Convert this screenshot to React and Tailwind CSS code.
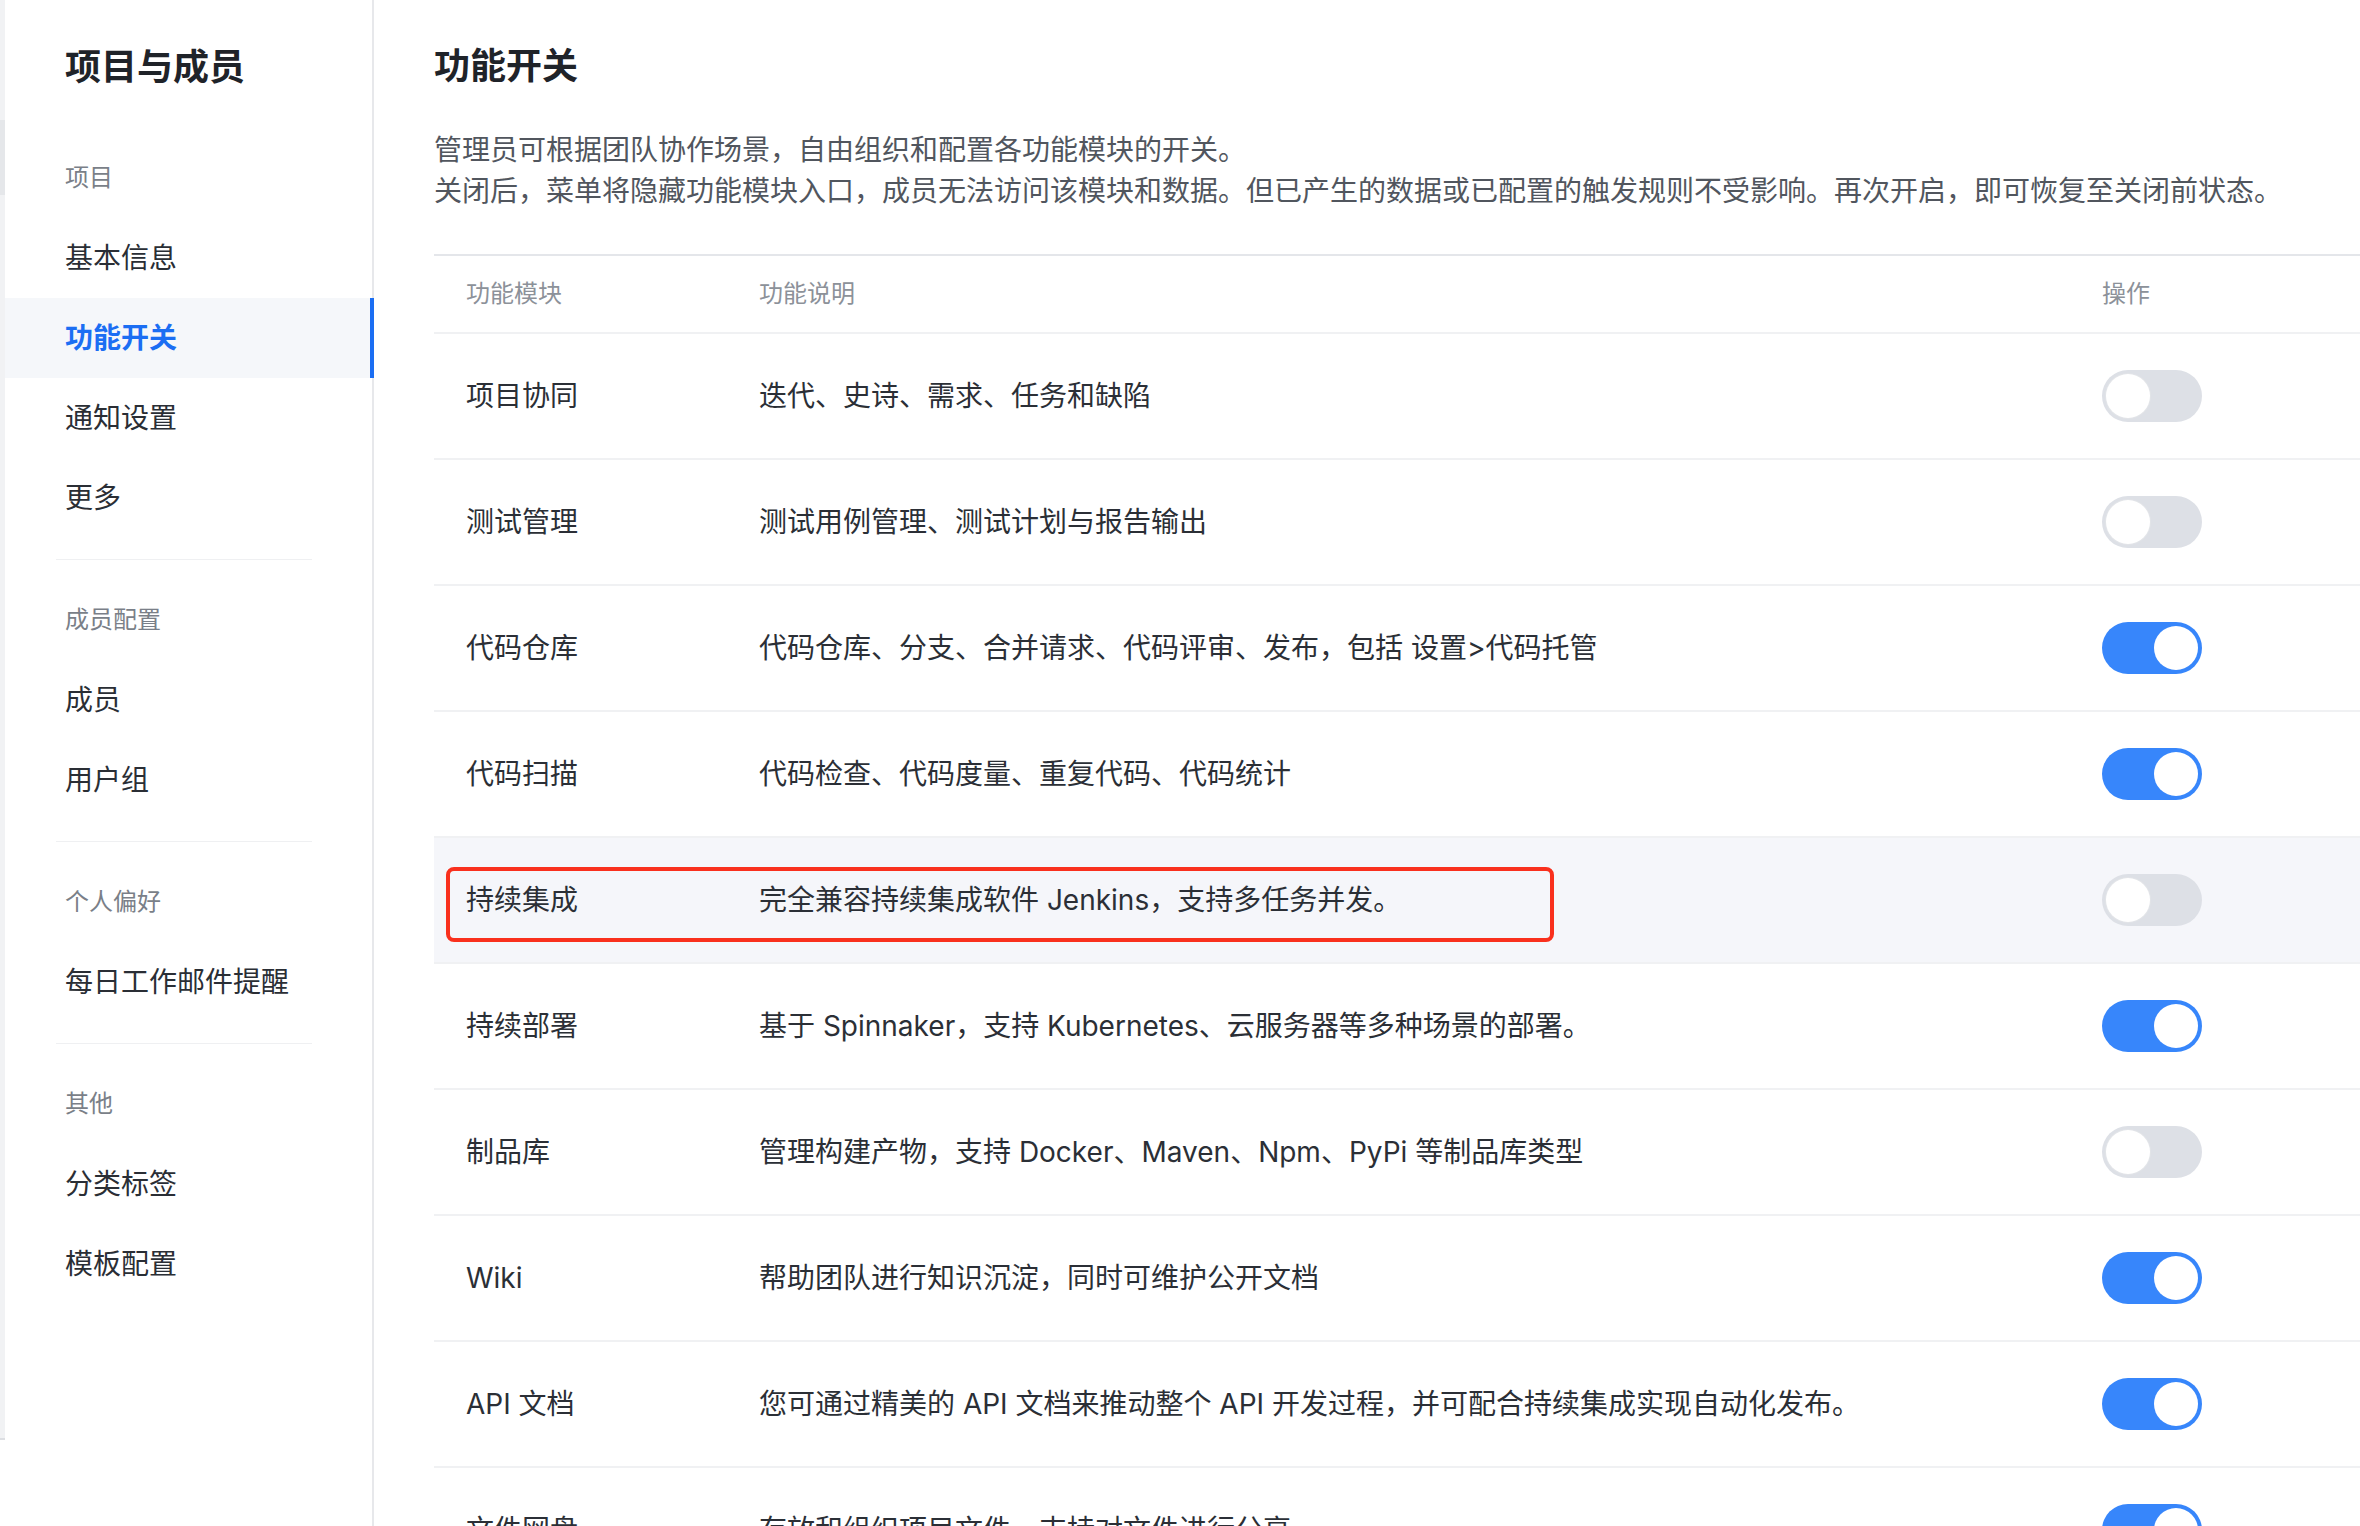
import React from "react";

const font = {
  fontFamily: 'Inter, "Noto Sans CJK SC", "Noto Sans", sans-serif',
};

const menu = [
  {
    label: "项目",
    items: ["基本信息", "功能开关", "通知设置", "更多"],
  },
  { label: "成员配置", items: ["成员", "用户组"] },
  { label: "个人偏好", items: ["每日工作邮件提醒"] },
  { label: "其他", items: ["分类标签", "模板配置"] },
];

const modules = [
  { name: "项目协同", desc: "迭代、史诗、需求、任务和缺陷", on: false },
  { name: "测试管理", desc: "测试用例管理、测试计划与报告输出", on: false },
  {
    name: "代码仓库",
    desc: "代码仓库、分支、合并请求、代码评审、发布，包括 设置>代码托管",
    on: true,
  },
  { name: "代码扫描", desc: "代码检查、代码度量、重复代码、代码统计", on: true },
  {
    name: "持续集成",
    desc: "完全兼容持续集成软件 Jenkins，支持多任务并发。",
    on: false,
    marked: true,
  },
  {
    name: "持续部署",
    desc: "基于 Spinnaker，支持 Kubernetes、云服务器等多种场景的部署。",
    on: true,
  },
  {
    name: "制品库",
    desc: "管理构建产物，支持 Docker、Maven、Npm、PyPi 等制品库类型",
    on: false,
  },
  { name: "Wiki", desc: "帮助团队进行知识沉淀，同时可维护公开文档", on: true },
  {
    name: "API 文档",
    desc: "您可通过精美的 API 文档来推动整个 API 开发过程，并可配合持续集成实现自动化发布。",
    on: true,
  },
  { name: "文件网盘", desc: "存放和组织项目文件，支持对文件进行分享", on: true },
];

const Toggle = ({ on }) => {
  return (
    <div
      className={`flex h-[52px] w-[100px] items-center rounded-full p-[4px] ${
        on ? "justify-end bg-[#3786fb]" : "justify-start bg-[#dde0e6]"
      }`}
    >
      <div
        className={`h-[44px] w-[44px] rounded-full bg-white ${
          on ? "" : "shadow-[0_0_0_1px_#e2e4e8]"
        }`}
      />
    </div>
  );
};

const Sidebar = () => {
  return (
    <aside className="flex w-[374px] shrink-0">
      {/* outer strip on the far left */}
      <div className="flex w-[5px] flex-col">
        <div className="h-[120px] bg-[#f1f2f4]" />
        <div className="h-[75px] bg-[#e5e7ea]" />
        <div className="h-[1243px] bg-[#f1f2f4]" />
        <div className="h-[2px] bg-[#dcdee2]" />
      </div>
      <div className="flex-1 border-r-2 border-[#e7e8eb] bg-white">
        <div className="h-[138px] pl-[60px] pt-[42px]">
          <h1 className="text-[36px] font-semibold leading-[50px] text-[#1f2329]">
            项目与成员
          </h1>
        </div>
        {menu.map((group, gi) => (
          <div key={group.label}>
            {gi > 0 && (
              <div className="ml-[51px] mr-[60px] mt-[21px] mb-[20px] h-px bg-[#eff0f2]" />
            )}
            <div className="flex h-[80px] items-center pl-[60px] text-[24px] text-[#7a7f88]">
              {group.label}
            </div>
            {group.items.map((item) =>
              item === "功能开关" ? (
                <div
                  key={item}
                  className="-mr-[2px] flex h-[80px] items-center border-r-4 border-[#1b6ef3] bg-[#f5f7fa] pl-[60px] text-[28px] font-semibold text-[#1b6ef3]"
                >
                  {item}
                </div>
              ) : (
                <div
                  key={item}
                  className="flex h-[80px] items-center pl-[60px] text-[28px] text-[#2a2e35]"
                >
                  {item}
                </div>
              )
            )}
          </div>
        ))}
      </div>
    </aside>
  );
};

const App = () => {
  return (
    <div
      className="flex h-[1526px] w-full overflow-hidden bg-white"
      style={font}
    >
      <Sidebar />
      <main className="flex-1 pl-[60px] pt-[42px]">
        <h2 className="text-[36px] font-semibold leading-[48px] text-[#1f2329]">
          功能开关
        </h2>
        <div className="mt-[40px] text-[28px] leading-[41px] text-[#51565e]">
          <p>管理员可根据团队协作场景，自由组织和配置各功能模块的开关。</p>
          <p className="whitespace-nowrap">
            关闭后，菜单将隐藏功能模块入口，成员无法访问该模块和数据。但已产生的数据或已配置的触发规则不受影响。再次开启，即可恢复至关闭前状态。
          </p>
        </div>

        <div className="mt-[42px] border-t-2 border-[#e4e6ea]">
          <div className="grid h-[78px] grid-cols-[325px_1fr_258px] items-center border-b-2 border-[#f0f1f3] text-[24px] text-[#8c9199]">
            <div className="pl-[32px]">功能模块</div>
            <div>功能说明</div>
            <div>操作</div>
          </div>
          {modules.map((m) => (
            <div
              key={m.name}
              className={`relative grid h-[126px] grid-cols-[325px_1fr_258px] items-center border-b-2 border-[#f0f1f3] text-[28px] text-[#2b2f36] ${
                m.marked ? "bg-[#f5f6fa]" : ""
              }`}
            >
              <div className="pl-[32px]">{m.name}</div>
              <div className="whitespace-nowrap">{m.desc}</div>
              <div>
                <Toggle on={m.on} />
              </div>
              {m.marked && (
                <div className="pointer-events-none absolute left-[12px] top-[29px] h-[75px] w-[1108px] rounded-[8px] border-4 border-[#f9301d]" />
              )}
            </div>
          ))}
        </div>
      </main>
    </div>
  );
};

export default App;
